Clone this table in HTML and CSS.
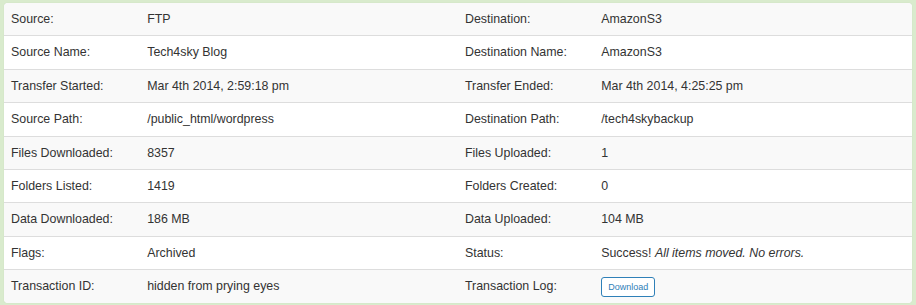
FILE: index.html
```html
<!DOCTYPE html>
<html>
<head>
<meta charset="utf-8">
<link rel="stylesheet" href="styles.css">
</head>
<body>
<div class="panel">
<table class="details">
<colgroup><col class="c-label"><col class="c-value"><col class="c-label"><col class="c-value"></colgroup>
<tbody>
<tr><td>Source:</td><td>FTP</td><td>Destination:</td><td>AmazonS3</td></tr>
<tr><td>Source Name:</td><td>Tech4sky Blog</td><td>Destination Name:</td><td>AmazonS3</td></tr>
<tr><td>Transfer Started:</td><td>Mar 4th 2014, 2:59:18 pm</td><td>Transfer Ended:</td><td>Mar 4th 2014, 4:25:25 pm</td></tr>
<tr><td>Source Path:</td><td>/public_html/wordpress</td><td>Destination Path:</td><td>/tech4skybackup</td></tr>
<tr><td>Files Downloaded:</td><td>8357</td><td>Files Uploaded:</td><td>1</td></tr>
<tr><td>Folders Listed:</td><td>1419</td><td>Folders Created:</td><td>0</td></tr>
<tr><td>Data Downloaded:</td><td>186 MB</td><td>Data Uploaded:</td><td>104 MB</td></tr>
<tr><td>Flags:</td><td>Archived</td><td>Status:</td><td>Success! <em>All items moved. No errors.</em></td></tr>
<tr><td>Transaction ID:</td><td>hidden from prying eyes</td><td>Transaction Log:</td><td><a class="btn" href="#">Download</a></td></tr>
</tbody>
</table>
</div>
</body>
</html>
```
FILE: styles.css
```css
html, body { margin: 0; padding: 0; }
body {
  background: #d9ebcd;
  padding: 3px 4px 3px 4px;
  font-family: "Liberation Sans", Arial, sans-serif;
  font-size: 12.4px;
  color: #333;
}
.panel {
  background: #fff;
  border-radius: 4px;
  overflow: hidden;
  box-shadow: 0 0 1px rgba(0,0,0,0.15);
}
.details {
  width: 100%;
  border-collapse: collapse;
  table-layout: fixed;
}
.c-label { width: 15%; }
.c-value { width: 35%; }
.details td {
  padding: 8px 7px;
  line-height: 16.4px;
  border-top: 1px solid #dddddd;
  white-space: nowrap;
  vertical-align: top;
}
.details tr:first-child td { border-top: 0; }
.details tr:nth-child(odd) td { background: #f9f9f9; }
.details em { font-style: italic; }
.btn {
  display: inline-block;
  vertical-align: middle;
  margin: -2px 0;
  font-size: 9px;
  line-height: 10px;
  padding: 4px 6px;
  border: 1px solid #2f80b8;
  border-radius: 3px;
  color: #2f80b8;
  text-decoration: none;
  background: #fff;
}
```
